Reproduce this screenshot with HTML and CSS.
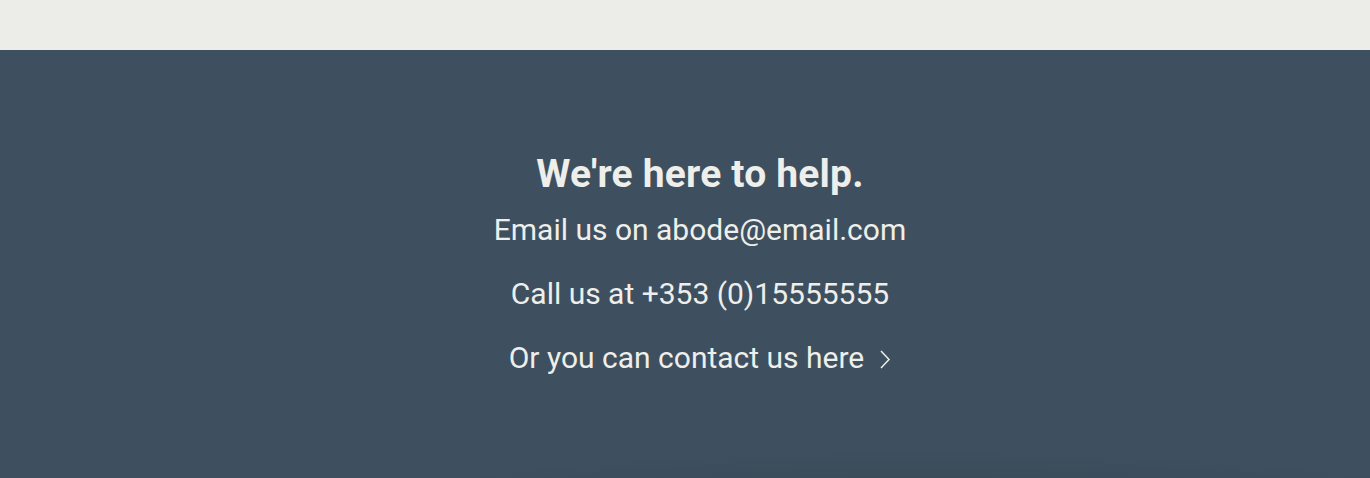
FILE: index.html
```html
<!DOCTYPE html>
<html>
<head>
<meta charset="utf-8">
<link rel="stylesheet" href="styles.css">
</head>
<body>
<div class="topbar"></div>
<section class="help">
  <h2 class="help-title">We're here to help.</h2>
  <p class="help-line">Email us on abode@email.com</p>
  <p class="help-line">Call us at +353 (0)15555555</p>
  <p class="help-line help-link">Or you can contact us here<svg class="chev" width="12" height="20" viewBox="0 0 12 20"><path d="M2 2 L10 10.5 L2 19" fill="none" stroke="#eeeeea" stroke-width="1.5"/></svg></p>
</section>
</body>
</html>
```
FILE: styles.css
```css
html, body { margin: 0; padding: 0; }
body {
  font-family: Roboto, "Liberation Sans", sans-serif;
  background: #3e505f;
  height: 478px;
  overflow: hidden;
}
.topbar {
  height: 50px;
  background: #ecece8;
}
.help {
  height: 428px;
  background:
    radial-gradient(ellipse 900px 170px at 920px 570px, rgba(50,64,78,1) 45%, rgba(62,80,95,0) 100%),
    #3e505f;
  color: #eeeeea;
  text-align: center;
  padding: 100px 0 0 30px;
  box-sizing: border-box;
}
.help-title {
  margin: 0;
  font-size: 39px;
  font-weight: 700;
  line-height: 48px;
  letter-spacing: 0.2px;
}
.help-line {
  margin: 0;
  font-size: 30px;
  line-height: 64px;
}
.help-title + .help-line { margin-top: 0; }
.chev { margin-left: 15px; vertical-align: -1px; }
```
